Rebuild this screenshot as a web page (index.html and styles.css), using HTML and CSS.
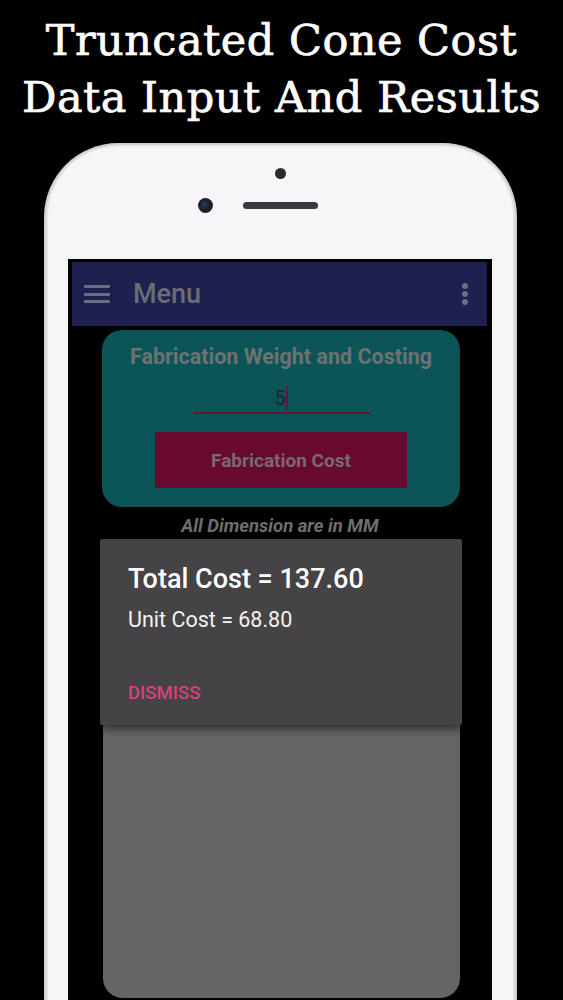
FILE: index.html
```html
<!DOCTYPE html>
<html>
<head>
<meta charset="utf-8">
<link rel="stylesheet" href="styles.css">
</head>
<body>
<h1 class="headline">Truncated Cone Cost<br>Data Input And Results</h1>
<div class="phone">
  <div class="bezel">
    <div class="sensor"></div>
    <div class="bezel-row">
      <div class="cam"></div>
      <div class="speaker"></div>
      <div></div>
    </div>
  </div>
  <div class="screen">
    <div class="appbar">
      <div class="hamburger"><span></span><span></span><span></span></div>
      <div class="appbar-title">Menu</div>
      <div class="overflow"><span></span><span></span><span></span></div>
    </div>
    <div class="card">
      <div class="card-title">Fabrication Weight and Costing</div>
      <div class="field"><span class="field-value">5</span><span class="caret"></span></div>
      <div class="btn">Fabrication Cost</div>
    </div>
    <div class="note">All Dimension are in MM</div>
    <div class="dialog">
      <div class="dlg-title">Total Cost = 137.60</div>
      <div class="dlg-body">Unit Cost = 68.80</div>
      <div class="dlg-action">DISMISS</div>
    </div>
    <div class="panel"></div>
  </div>
</div>
</body>
</html>
```
FILE: styles.css
```css
html, body {
  margin: 0;
  padding: 0;
  background: #000;
}
body {
  width: 563px;
  height: 1000px;
  overflow: hidden;
}
.headline {
  margin: 0;
  padding-top: 12px;
  font-family: "DejaVu Serif", serif;
  font-weight: normal;
  font-size: 43px;
  line-height: 57px;
  color: #fff;
  text-align: center;
  letter-spacing: 0.5px;
  -webkit-text-stroke: 0.7px #fff;
}
.phone {
  margin: 17px 0 0 44px;
  width: 473px;
  height: 880px;
  box-sizing: border-box;
  background: #f6f5f7;
  border: 2px solid #cfced2;
  border-bottom: none;
  border-radius: 74px 74px 0 0;
  box-shadow: inset 2px 0 0 #e4e3e7, inset -2px 0 0 #e4e3e7, inset 0 2px 0 #e9e8ec;
}
.bezel {
  height: 114px;
  display: flex;
  flex-direction: column;
  align-items: center;
}
.sensor {
  margin-top: 23px;
  width: 11px;
  height: 11px;
  border-radius: 50%;
  background: #2a2a2e;
}
.bezel-row {
  margin-top: 19px;
  width: 100%;
  display: grid;
  grid-template-columns: 1fr auto 1fr;
  align-items: center;
}
.cam {
  justify-self: end;
  margin-right: 30px;
  width: 15px;
  height: 15px;
  border-radius: 50%;
  background: radial-gradient(circle at 45% 45%, #2b3a6a 0, #1a1d2c 45%, #2d2d33 100%);
}
.speaker {
  width: 75px;
  height: 7px;
  border-radius: 4px;
  background: #3a393e;
}
.screen {
  margin: 0 23px 0 22px;
  height: 760px;
  background: #000;
  padding-top: 3px;
  box-sizing: border-box;
  font-family: Roboto, "Liberation Sans", sans-serif;
}
.appbar {
  margin: 0 5px 0 4px;
  height: 64px;
  background: #1e2050;
  display: flex;
  align-items: center;
  padding: 0 19px 0 12px;
}
.hamburger {
  width: 26px;
  display: flex;
  flex-direction: column;
  gap: 4.5px;
}
.hamburger span {
  display: block;
  height: 3px;
  background: #6b6f82;
  border-radius: 1px;
}
.appbar-title {
  margin-left: 23px;
  flex: 1;
  font-size: 27px;
  font-weight: 500;
  color: #6b6d76;
}
.overflow {
  display: flex;
  flex-direction: column;
  gap: 2px;
}
.overflow span {
  display: block;
  width: 6px;
  height: 6px;
  border-radius: 50%;
  background: #6b6f82;
}
.card {
  margin: 4px 32px 0 34px;
  height: 177px;
  box-sizing: border-box;
  background: #0b5458;
  border-radius: 20px;
  padding-top: 15px;
  display: flex;
  flex-direction: column;
  align-items: center;
}
.card-title {
  font-size: 21.5px;
  line-height: 24px;
  font-weight: 700;
  color: #6c7272;
  white-space: nowrap;
}
.field {
  margin-top: 11px;
  width: 177px;
  height: 34px;
  box-sizing: border-box;
  border-bottom: 2px solid #6a1238;
  display: flex;
  justify-content: center;
  align-items: center;
  padding-top: 4px;
}
.field-value {
  font-size: 20px;
  color: #16292b;
}
.caret {
  width: 2px;
  height: 24px;
  background: #6a1238;
}
.btn {
  margin-top: 18px;
  width: 252px;
  height: 56px;
  background: #68092f;
  border-radius: 2px;
  display: flex;
  align-items: center;
  justify-content: center;
  font-size: 19px;
  font-weight: 700;
  color: #776a70;
}
.note {
  margin-top: 9px;
  text-align: center;
  font-size: 18.5px;
  line-height: 20px;
  font-style: italic;
  font-weight: 700;
  color: #6e6e6e;
}
.dialog {
  margin: 3px 30px 0 32px;
  height: 186px;
  box-sizing: border-box;
  background: #454345;
  border-radius: 2px;
  padding: 25px 28px 0 28px;
  box-shadow: 0 3px 8px rgba(0, 0, 0, 0.5);
  position: relative;
  z-index: 1;
}
.dlg-title {
  font-size: 27px;
  line-height: 30px;
  font-weight: 500;
  color: #fff;
}
.dlg-body {
  margin-top: 14px;
  font-size: 21.5px;
  line-height: 24px;
  color: #f2f2f2;
}
.dlg-action {
  margin-top: 51px;
  font-size: 18.5px;
  line-height: 20px;
  font-weight: 500;
  color: #dc3f7c;
}
.panel {
  margin: 0 32px 0 35px;
  height: 273px;
  background: linear-gradient(#5d5b5e 0, #666467 14px, #666467 100%);
  border-radius: 0 0 20px 20px;
}
```
